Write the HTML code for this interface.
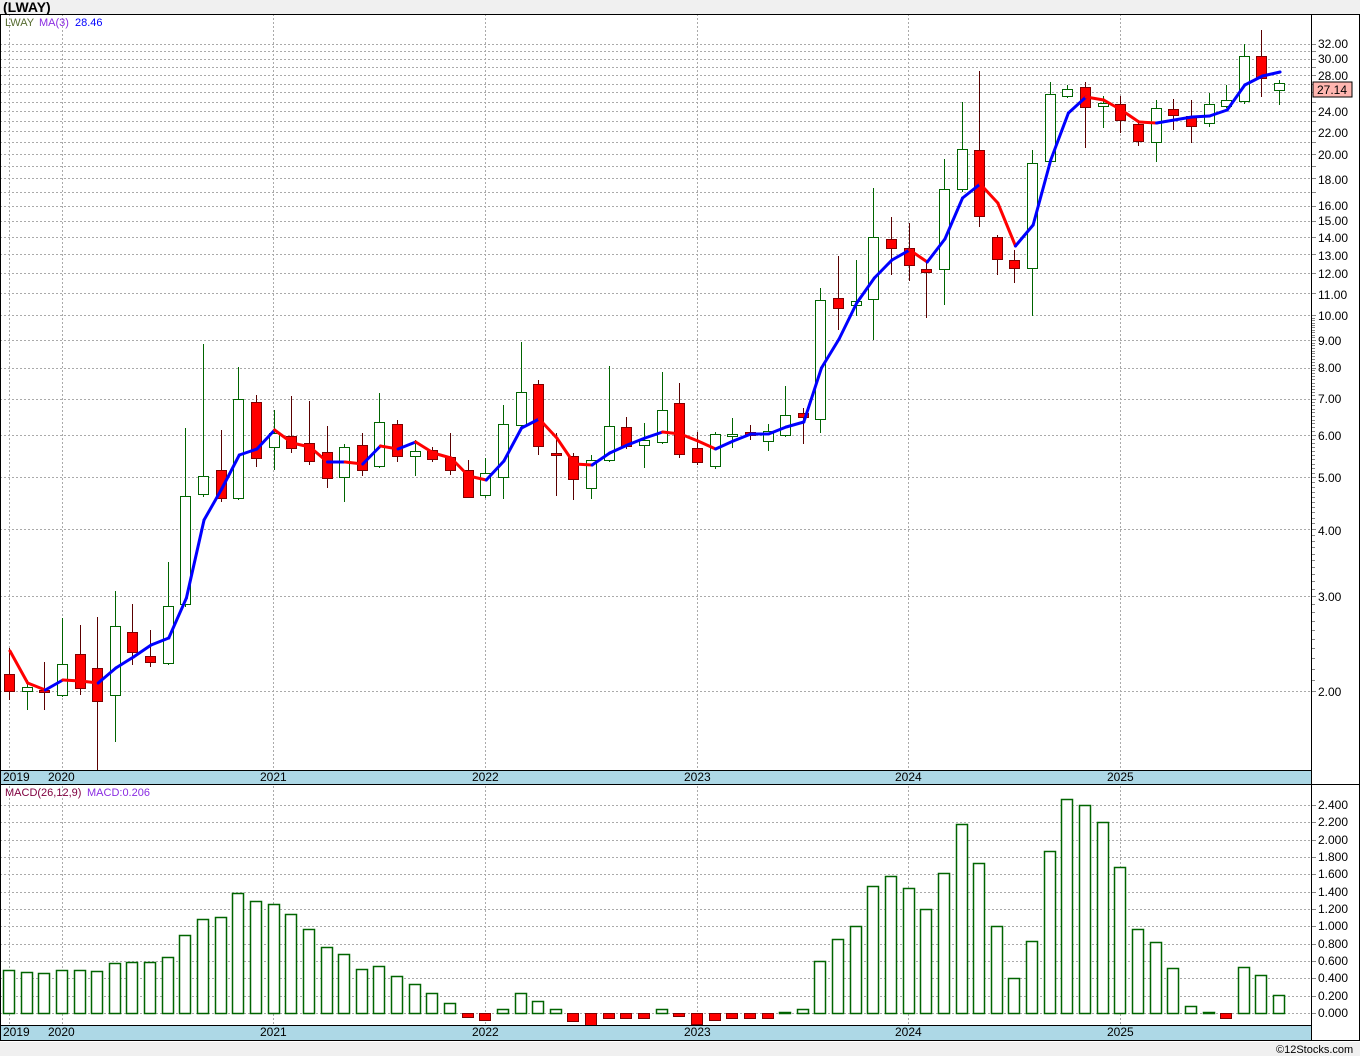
<!DOCTYPE html>
<html><head><meta charset="utf-8"><style>
html,body{margin:0;padding:0;background:#f0f0f0;width:1360px;height:1056px;overflow:hidden;font-family:"Liberation Sans","DejaVu Sans",sans-serif}
svg{position:absolute;left:0;top:0}
text{font-family:"Liberation Sans","DejaVu Sans",sans-serif;font-size:12px;fill:#000}
</style></head><body>
<svg id="s" width="1360" height="1056" xmlns="http://www.w3.org/2000/svg">
<rect x="0" y="14" width="1360" height="1028" fill="#fff"/>
<g id="grid"></g>
<rect x="0" y="770" width="1311" height="14" fill="#add8e6"/>
<rect x="0" y="1025" width="1311" height="15" fill="#add8e6"/>
<g id="plot"></g>
<line x1="0" y1="14.5" x2="1360" y2="14.5" stroke="#000"/>
<line x1="0" y1="770.5" x2="1311" y2="770.5" stroke="#000"/>
<line x1="0" y1="784.5" x2="1360" y2="784.5" stroke="#000"/>
<line x1="0" y1="1025.5" x2="1311" y2="1025.5" stroke="#000"/>
<line x1="0" y1="1040.5" x2="1360" y2="1040.5" stroke="#000"/>
<line x1="1311.5" y1="14" x2="1311.5" y2="1040" stroke="#000"/>
<line x1="0.5" y1="14" x2="0.5" y2="1040" stroke="#000"/>
<line x1="1359.5" y1="14" x2="1359.5" y2="1040" stroke="#000"/>
<text x="3" y="12" style="font-size:14px;font-weight:bold">(LWAY)</text>
<text x="5" y="26" style="font-size:11px;fill:#556b2f">LWAY</text>
<text x="39" y="26" style="font-size:11px;fill:#8a2be2">MA(3)</text>
<text x="75" y="26" style="font-size:11px;fill:#0000ff">28.46</text>
<text x="5" y="796" style="font-size:11px;fill:#800040">MACD(26,12,9)</text>
<text x="87" y="796" style="font-size:11px;fill:#8a2be2">MACD:0.206</text>
<g style="font-size:12px">
<text x="3" y="781">2019</text><text x="48" y="781">2020</text><text x="260" y="781">2021</text><text x="472" y="781">2022</text><text x="684" y="781">2023</text><text x="895" y="781">2024</text><text x="1107" y="781">2025</text>
<text x="3" y="1036">2019</text><text x="48" y="1036">2020</text><text x="260" y="1036">2021</text><text x="472" y="1036">2022</text><text x="684" y="1036">2023</text><text x="895" y="1036">2024</text><text x="1107" y="1036">2025</text>
</g>
<g style="font-size:12px">
<text x="1318" y="48">32.00</text><text x="1318" y="63">30.00</text><text x="1318" y="80">28.00</text>
<text x="1318" y="116">24.00</text><text x="1318" y="137">22.00</text><text x="1318" y="159">20.00</text><text x="1318" y="184">18.00</text>
<text x="1318" y="210">16.00</text><text x="1318" y="225">15.00</text><text x="1318" y="242">14.00</text><text x="1318" y="260">13.00</text>
<text x="1318" y="278">12.00</text><text x="1318" y="299">11.00</text><text x="1318" y="320">10.00</text><text x="1318" y="345">9.00</text>
<text x="1318" y="372">8.00</text><text x="1318" y="403">7.00</text><text x="1318" y="440">6.00</text><text x="1318" y="482">5.00</text>
<text x="1318" y="535">4.00</text><text x="1318" y="601">3.00</text><text x="1318" y="696">2.00</text>
<rect x="1313" y="82" width="39" height="15" fill="#ffb6b0" stroke="#000"/>
<text x="1317" y="94">27.14</text>
<text x="1318" y="809">2.400</text><text x="1318" y="826">2.200</text><text x="1318" y="844">2.000</text><text x="1318" y="861">1.800</text>
<text x="1318" y="878">1.600</text><text x="1318" y="896">1.400</text><text x="1318" y="913">1.200</text><text x="1318" y="930">1.000</text>
<text x="1318" y="948">0.800</text><text x="1318" y="965">0.600</text><text x="1318" y="982">0.400</text><text x="1318" y="1000">0.200</text>
<text x="1318" y="1017">0.000</text>
</g>
<text x="1276" y="1053" style="font-size:11px">©12Stocks.com</text>
</svg>
<script>
var NS="http://www.w3.org/2000/svg";
function el(p,t,a){var e=document.createElementNS(NS,t);for(var k in a)e.setAttribute(k,a[k]);document.getElementById(p).appendChild(e);return e;}
function py(p){return 691-161.75*Math.log2(p/2);}
var prices=[32,31,30,29,28,27,26,25,24,23,22,21,20,19,18,17,16,15,14,13,12,11,10,9,8,7,6,5,4,3,2];
prices.forEach(function(p){var y=Math.round(py(p))+.5;
 el("grid","line",{x1:0,x2:1311,y1:y,y2:y,stroke:"#aaa","stroke-dasharray":"2,2"});
 el("grid","line",{x1:1311,x2:1316,y1:y,y2:y,stroke:"#888"});});
for(var p=2;p<32;p+=0.1){if(p<10||Math.abs(p-Math.round(p))<0.01){var y=Math.round(py(p))+.5;el("grid","line",{x1:1311,x2:1315,y1:y,y2:y,stroke:"#888"});}}
for(var v=0;v<=2.4001;v+=0.2){var y=Math.round(1013-86.67*v)+.5;el("grid","line",{x1:0,x2:1311,y1:y,y2:y,stroke:"#aaa","stroke-dasharray":"2,2"});el("grid","line",{x1:1311,x2:1316,y1:y,y2:y,stroke:"#888"});}
[9,62,273,485,697,908,1120].forEach(function(x){el("grid","line",{x1:x+.5,x2:x+.5,y1:14,y2:1040,stroke:"#aaa","stroke-dasharray":"2,2"});});
var C=[[0,674,691,648,700],[1,687,691,680,710],[0,690,692,662,710],[1,664,695,618,697],[0,654,688,625,695],[0,668,701,617,770],[1,626,695,591,742],[0,632,652,604,665],[0,656,662,630,667],[1,606,663,562,665],
[1,496,604,428,607],[1,476,494,344,497],[0,470,498,430,502],[1,399,498,367,500],[0,402,458,395,467],[1,433,447,410,470],[0,436,448,396,453],[0,443,461,401,465],[0,452,478,426,488],[1,447,477,444,502],
[0,445,470,433,476],[1,422,466,393,468],[0,424,456,420,462],[1,451,456,440,476],[0,450,459,447,462],[0,457,470,433,475],[0,470,497,460,498],[1,473,495,458,498],[1,424,477,405,499],[1,392,425,342,427],
[0,384,446,380,455],[0,453,455,433,496],[0,456,479,453,500],[1,460,488,455,499],[1,426,460,366,462],[0,427,446,417,449],[1,440,445,423,468],[1,410,442,372,444],[0,403,454,383,458],[0,448,462,432,465],
[1,434,466,432,469],[1,434,436,418,448],[0,432,435,425,440],[1,431,441,424,451],[1,415,435,386,437],[0,413,417,408,444],[1,300,419,288,433],[0,298,308,256,330],[1,301,305,260,316],[1,237,299,188,340],
[0,239,248,217,275],[0,248,265,223,281],[0,269,272,261,318],[1,189,269,159,305],[1,149,189,102,192],[0,150,216,71,227],[0,237,259,235,275],[0,260,268,250,283],[1,163,268,150,316],[1,94,161,82,163],
[1,89,96,85,98],[0,87,107,82,148],[1,103,106,96,128],[0,104,120,96,133],[0,124,141,120,146],[1,108,142,100,162],[0,109,115,99,130],[0,116,126,100,143],[1,104,123,93,127],[1,100,106,85,108],
[1,56,101,44,104],[0,56,78,30,97],[1,83,90,80,105]];
var M=[970,972,973,970,970,971,963,962,962,957,935,919,917,893,901,904,914,929,947,954,969,966,976,984,993,1003,-1017,-1020,1009,993,1001,1009,-1021,-1025,-1018,-1018,-1018,1009,-1016,-1024,-1020,-1018,-1018,-1018,1012,1009,961,939,926,886,876,888,909,873,824,863,926,978,941,851,799,805,822,867,929,942,968,1006,1012,-1018,967,975,995];
var MA=[651,683,690,680,681,683,668,657,645,638,598,520,489,455,449,430,443,447,462,462,464,446,449,442,453,458,476,480,461,428,419,438,464,465,453,445,438,432,434,441,449,441,434,434,427,422,368,339,303,278,260,250,262,239,198,184,203,246,225,160,113,97,100,110,122,123,120,117,116,110,85,76,72];
function X(i){return 9+17.64*i;}
C.forEach(function(c,i){var x=Math.round(X(i))+.5;var up=c[0];var wc=up?"#006400":"#5a0000";
 el("plot","line",{x1:x,x2:x,y1:c[3],y2:c[4],stroke:wc});
 var h=Math.max(2,c[2]-c[1]);
 el("plot","rect",{x:x-5,y:c[1]+.5,width:10,height:h,fill:up?"#fff":"#ff0000",stroke:up?"#006400":"#800000"});});
M.forEach(function(v,i){var x=Math.round(X(i))-5.5;
 if(v<0){v=-v;el("plot","rect",{x:x,y:1013.5,width:11,height:v-1013,fill:"#ff0000",stroke:"#800000"});}
 else{el("plot","rect",{x:x,y:v+.5,width:11,height:Math.max(0.5,1013-v),fill:"#fff",stroke:"#006400","stroke-width":1.5});}});
for(var i=0;i<MA.length-1;i++){el("plot","line",{x1:X(i)+1,y1:MA[i],x2:X(i+1)+1,y2:MA[i+1],stroke:MA[i+1]>MA[i]?"#ff0000":"#0000ff","stroke-width":3,"stroke-linecap":"round"});}
</script>
</body></html>
